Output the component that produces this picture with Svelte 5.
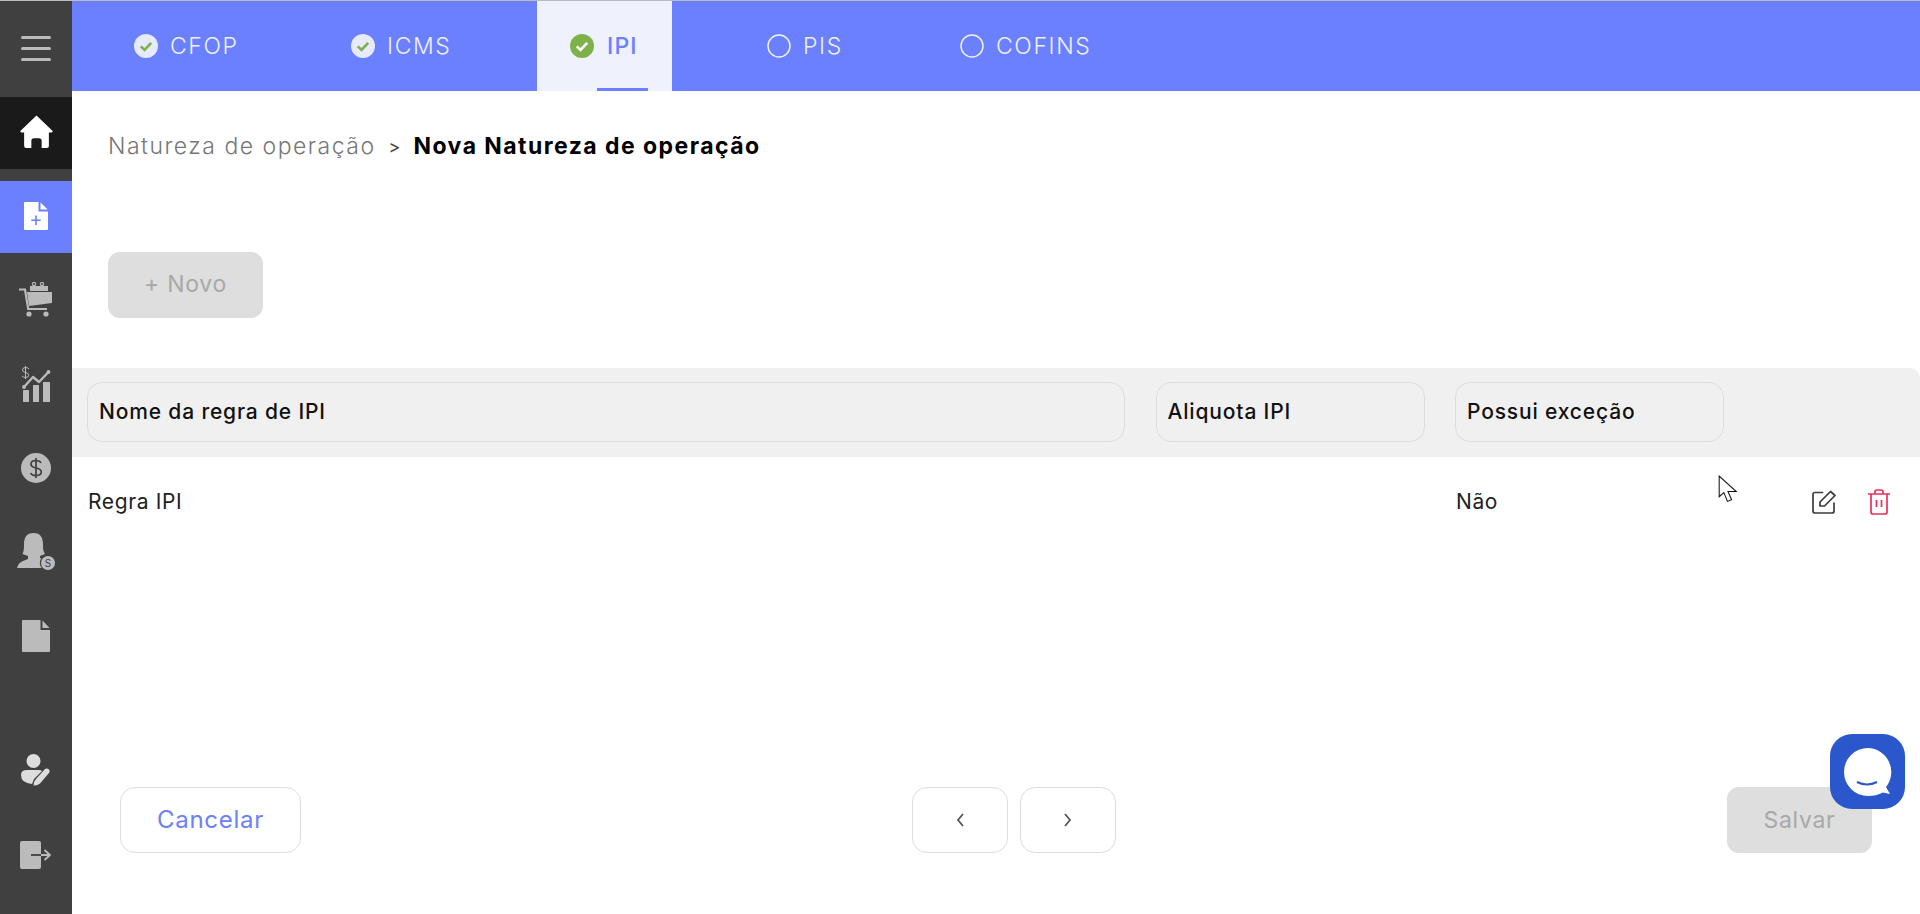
<script>
  const tabs = [
    { label: 'CFOP', state: 'done' },
    { label: 'ICMS', state: 'done' },
    { label: 'IPI', state: 'active' },
    { label: 'PIS', state: 'todo' },
    { label: 'COFINS', state: 'todo' }
  ];
</script>

<div class="shell">
  <aside class="sidebar">
    <button class="burger" aria-label="Menu"><span></span><span></span><span></span></button>

    <nav class="menu">
      <div class="item home">
        <svg width="33" height="33" viewBox="0 0 32 32"><path fill="#fff" d="M16 0.5 L31.4 15.2 Q32.4 17 30 17 H28 V30 Q28 32 26 32 H21 V25 Q21 22.5 18.5 22.5 H13.5 Q11 22.5 11 25 V32 H6 Q4 32 4 30 V17 H2 Q-.4 17 .6 15.2 Z"/></svg>
      </div>
      <div class="item current">
        <svg width="24" height="28" viewBox="0 0 24 28"><path fill="#fff" d="M1 0 H14.5 V9.5 H24 V27 Q24 28 23 28 H1 Q0 28 0 27 V1 Q0 0 1 0 Z"/><path fill="#fff" d="M16.5 .6 L23.6 7.5 H16.5 Z"/><path stroke="#6a80ff" stroke-width="1.6" fill="none" d="M12 13.5 V23 M7.3 18.2 H16.7"/></svg>
      </div>
      <div class="item">
        <svg width="34" height="35" viewBox="0 0 34 35" fill="#bbb"><path d="M0 7.5 H6 L9.2 27 H28" fill="none" stroke="#bbb" stroke-width="2.2"/><path d="M8 10 H33 V21 L10 24 Z"/><rect x="11" y="4" width="18" height="5"/><circle cx="15" cy="2" r="1.6" fill="none" stroke="#bbb" stroke-width="1.2"/><circle cx="23" cy="2" r="1.6" fill="none" stroke="#bbb" stroke-width="1.2"/><circle cx="10" cy="32" r="2.6"/><circle cx="27" cy="32" r="2.6"/></svg>
      </div>
      <div class="item chart">
        <svg width="30" height="36" viewBox="0 0 30 36" fill="#bbb"><rect x="2" y="24" width="6" height="12" rx=".6"/><rect x="12" y="19" width="6" height="17" rx=".6"/><rect x="22" y="16" width="7" height="20" rx=".6"/><path d="M3 21 L12 11 L18 16 L27.5 6" fill="none" stroke="#bbb" stroke-width="2.4" stroke-linecap="round" stroke-linejoin="round"/><circle cx="3" cy="21" r="1.9"/><circle cx="27.5" cy="6" r="1.9"/><path d="M8 3 Q7 1.5 4.5 1.5 Q1.5 1.5 1.5 4 Q1.5 6 4.5 6.5 Q7.7 7 7.7 9.3 Q7.7 11.5 4.5 11.5 Q2 11.5 1 10 M4.5 0 V13" fill="none" stroke="#bbb" stroke-width="1"/></svg>
      </div>
      <div class="item">
        <svg width="30" height="30" viewBox="0 0 30 30"><circle cx="15" cy="15" r="15" fill="#bbb"/><path d="M20 10 Q19 7.5 15 7.5 Q10 7.5 10 11 Q10 14 15 15 Q20.3 16 20.3 19 Q20.3 22.5 15 22.5 Q10.5 22.5 9.7 20 M15 5 V25" fill="none" stroke="#404040" stroke-width="1.7"/></svg>
      </div>
      <div class="item">
        <svg width="38" height="37" viewBox="0 0 38 37"><path fill="#bbb" d="M7 11 C7 3 11 0 16.5 0 C22 0 26 3 26 11 C26 15 26 18 28 21 L23 23 V25 Q28 26 31 28 V35 H0 Q1 30 6 28 L11 26 V23 L5.5 21 C7 18 7 15 7 11 Z"/><circle cx="31" cy="30" r="7.6" fill="#bbb" stroke="#404040" stroke-width="1.2"/><text x="31" y="34" class="mini">S</text></svg>
      </div>
      <div class="item">
        <svg width="28" height="32" viewBox="0 0 28 32"><path fill="#bbb" d="M1 0 H18.5 V10 H28 V31 Q28 32 27 32 H1 Q0 32 0 31 V1 Q0 0 1 0 Z"/><path fill="#bbb" d="M20.5 .5 L27.6 8 H20.5 Z"/></svg>
      </div>
    </nav>

    <div class="menu bottom">
      <div class="item">
        <svg width="30" height="32" viewBox="0 0 30 32"><circle cx="12.5" cy="7" r="7" fill="#ddd"/><path fill="#ddd" d="M0 21 Q0 16 6 16 H18 Q20 16 21 17 L13 25 L11 30 Q0 29 0 21 Z"/><path fill="#ddd" d="M24 15 Q26 14 28 15.5 Q29.5 17.5 28 19 L19 29.5 Q16 32 12.5 31.5 Q12.5 27.5 15 25 Z"/></svg>
      </div>
      <div class="item">
        <svg width="32" height="28" viewBox="0 0 32 28"><rect x="0" y="0" width="21" height="28" rx="2" fill="#bbb"/><path d="M11 14 H21" fill="none" stroke="#404040" stroke-width="1.8"/><path d="M21 14 H29 M24.5 9 L30 14 L24.5 19" fill="none" stroke="#bbb" stroke-width="1.8"/></svg>
      </div>
    </div>
  </aside>

  <main class="main">
    <nav class="tabs">
      {#each tabs as tab}
        <div class="tab" class:selected={tab.state === 'active'}>
          {#if tab.state === 'todo'}
            <svg width="24" height="24" viewBox="0 0 24 24"><circle cx="12" cy="12" r="11" fill="none" stroke="#eef0fd" stroke-width="1.5"/></svg>
          {:else}
            <svg width="24" height="24" viewBox="0 0 24 24">
              <circle cx="12" cy="12" r="12" fill={tab.state === 'active' ? '#7fb14b' : '#e6eafb'}/>
              <path d="M6.8 12.4 L10.5 16 L17.2 8.8" fill="none" stroke={tab.state === 'active' ? '#fff' : '#7fb14b'} stroke-width="2.6"/>
            </svg>
          {/if}
          <span>{tab.label}</span>
        </div>
      {/each}
    </nav>

    <div class="crumbs">
      <span class="parent">Natureza de operação</span>
      <span class="sep">&gt;</span>
      <strong>Nova Natureza de operação</strong>
    </div>

    <button class="btn-new" disabled>+ Novo</button>

    <section class="table">
      <div class="head">
        <div class="th">Nome da regra de IPI</div>
        <div class="th">Aliquota IPI</div>
        <div class="th">Possui exceção</div>
      </div>
      <div class="row">
        <div>Regra IPI</div>
        <div></div>
        <div>Não</div>
        <div class="actions">
          <svg width="24" height="24" viewBox="0 0 24 24" fill="none" stroke="#3c3c3c" stroke-width="1.7" stroke-linejoin="round"><path d="M10.5 2.5 H3 Q1 2.5 1 4.5 V21 Q1 23 3 23 H20 Q22 23 22 21 V13" stroke-linecap="round"/><path d="M8 12 L18.5 1.5 L23 5.5 L12.5 16 H8 Z"/></svg>
          <svg width="22" height="26" viewBox="0 0 22 26" fill="none" stroke="#e8305f" stroke-width="1.7"><path d="M0 5 H22 M7 5 V3 Q7 1 9 1 H13 Q15 1 15 3 V5 M3 5 V23 Q3 25 5 25 H17 Q19 25 19 23 V5 M8.5 11 V18 M13.5 11 V18"/></svg>
        </div>
      </div>
    </section>

    <footer class="footer">
      <button class="btn-outline cancel">Cancelar</button>
      <div class="pager">
        <button class="btn-outline page" aria-label="Anterior"><svg width="10" height="16" viewBox="0 0 10 16"><path d="M8 2 L3 8 L8 14" fill="none" stroke="#555" stroke-width="1.8"/></svg></button>
        <button class="btn-outline page" aria-label="Próximo"><svg width="10" height="16" viewBox="0 0 10 16"><path d="M2 2 L7 8 L2 14" fill="none" stroke="#555" stroke-width="1.8"/></svg></button>
      </div>
      <button class="btn-save" disabled>Salvar</button>
    </footer>
  </main>

  <svg class="cursor" width="21" height="30" viewBox="0 0 20 29"><path d="M1 1 V21 L5.5 17 L9 25.5 L13 24 L9.5 16 H17.5 Z" fill="#fff" stroke="#111" stroke-width="1"/></svg>

  <div class="chat">
    <svg width="50" height="50" viewBox="0 0 50 50"><path fill="#fff" d="M25 1 A24 24 0 1 0 25 49 Q33 49 40 45.5 L47 47 L43 40 A24 24 0 0 0 25 1 Z"/><path d="M14 35 Q24 40 34 35" fill="none" stroke="#2a57cc" stroke-width="2"/></svg>
  </div>
</div>

<style>
  :global(body) {
    margin: 0;
    background: #fff;
  }

  .shell {
    display: flex;
    height: 914px;
    overflow: hidden;
    position: relative;
    font-family: Inter, "Noto Sans", sans-serif;
    color: #1c1c1c;
  }

  .sidebar {
    width: 72px;
    flex: none;
    display: flex;
    flex-direction: column;
    background: #404040;
    border-top: 1px solid #bbb;
    box-sizing: border-box;
  }

  .burger {
    height: 94px;
    margin-bottom: 2px;
    flex: none;
    padding: 0;
    background: none;
    border: none;
    display: flex;
    flex-direction: column;
    align-items: center;
    justify-content: center;
    gap: 8px;
  }

  .burger span {
    width: 30px;
    height: 3px;
    border-radius: 2px;
    background: #bbb;
  }

  .menu {
    display: flex;
    flex-direction: column;
    gap: 12px;
  }

  .menu.bottom {
    margin-top: auto;
    gap: 13px;
    padding-bottom: 22px;
  }

  .item {
    height: 72px;
    box-sizing: border-box;
    padding-bottom: 3px;
    display: flex;
    align-items: center;
    justify-content: center;
  }

  .home {
    background: #1a1a1a;
  }

  .current {
    background: #6a80ff;
  }

  .mini {
    font-size: 10px;
    text-anchor: middle;
    fill: #404040;
  }

  .main {
    flex: 1;
    min-width: 0;
    display: flex;
    flex-direction: column;
  }

  .tabs {
    display: flex;
    height: 90px;
    flex: none;
    padding-left: 29px;
    background: #6a80ff;
    border-top: 1px solid #bbb;
  }

  .tab {
    display: flex;
    align-items: center;
    gap: 12px;
    padding-left: 33px;
    box-sizing: border-box;
    font-size: 23px;
    font-weight: 300;
    letter-spacing: 0.07em;
    color: #eef0fd;
  }

  .tab:nth-child(1) { width: 217px; }
  .tab:nth-child(2) { width: 219px; }
  .tab:nth-child(3) { width: 135px; }
  .tab:nth-child(4) { width: 193px; margin-left: 62px; }

  .tab.selected {
    position: relative;
    background: #eff1fd;
    color: #6a80ff;
    gap: 13px;
    font-weight: 500;
    letter-spacing: 0.05em;
  }

  .tab.selected::after {
    content: '';
    position: absolute;
    left: 60px;
    bottom: 0;
    width: 51px;
    height: 3px;
    background: #6a80ff;
  }

  .crumbs {
    display: flex;
    align-items: center;
    gap: 13px;
    height: 30px;
    margin: 40px 0 0 36px;
    font-size: 23px;
  }

  .parent {
    font-weight: 300;
    color: #777;
    letter-spacing: 0.065em;
  }

  .sep {
    font-size: 18px;
    font-weight: 400;
    color: #444;
  }

  .crumbs strong {
    font-weight: 700;
    color: #000;
    letter-spacing: 0.063em;
  }

  .btn-new {
    width: 155px;
    height: 66px;
    margin: 91px 0 0 36px;
    flex: none;
    border: none;
    border-radius: 12px;
    background: #dedede;
    color: #a8a8a8;
    font: 400 23px Inter, sans-serif;
    letter-spacing: 0.03em;
    padding-bottom: 3px;
  }

  .table {
    margin-top: 50px;
  }

  .head,
  .row {
    display: grid;
    grid-template-columns: 1038px 269px 269px 1fr;
    column-gap: 30.5px;
    padding: 0 15px;
  }

  .head {
    height: 89px;
    box-sizing: border-box;
    padding-top: 14px;
    background: #f0f0f0;
    border-top-right-radius: 10px;
  }

  .th {
    height: 60px;
    box-sizing: border-box;
    display: flex;
    align-items: center;
    padding: 0 0 2px 11px;
    border: 1px solid #ddd;
    border-radius: 15px;
    font-size: 21px;
    font-weight: 500;
    letter-spacing: 0.04em;
    color: #111;
  }

  .row {
    height: 90px;
    align-items: center;
    font-size: 21px;
    font-weight: 400;
    letter-spacing: 0.03em;
    color: #222;
  }

  .row > div {
    padding: 0 0 2px 1px;
  }

  .row > .actions {
    display: flex;
    align-items: center;
    justify-content: flex-end;
    gap: 32px;
    padding: 0 15px 0 0;
  }

  .footer {
    display: flex;
    justify-content: space-between;
    margin-top: 240px;
    padding: 0 48px;
  }

  .btn-outline {
    height: 66px;
    background: #fff;
    border: 1px solid #ddd;
    border-radius: 15px;
  }

  .cancel {
    width: 181px;
    color: #6a80ff;
    font: 400 24px Inter, sans-serif;
    letter-spacing: 0.03em;
    padding-bottom: 3px;
  }

  .pager {
    display: flex;
    gap: 12px;
  }

  .page {
    width: 96px;
    display: flex;
    align-items: center;
    justify-content: center;
  }

  .btn-save {
    width: 145px;
    height: 66px;
    border: none;
    border-radius: 12px;
    background: #dedede;
    color: #a8a8a8;
    font: 400 23px Inter, sans-serif;
    letter-spacing: 0.03em;
  }

  .cursor {
    position: absolute;
    left: 1718px;
    top: 475px;
  }

  .chat {
    position: absolute;
    left: 1830px;
    top: 734px;
    width: 75px;
    height: 75px;
    border-radius: 22px;
    background: #2a57cc;
    display: flex;
    align-items: center;
    justify-content: center;
  }
</style>
